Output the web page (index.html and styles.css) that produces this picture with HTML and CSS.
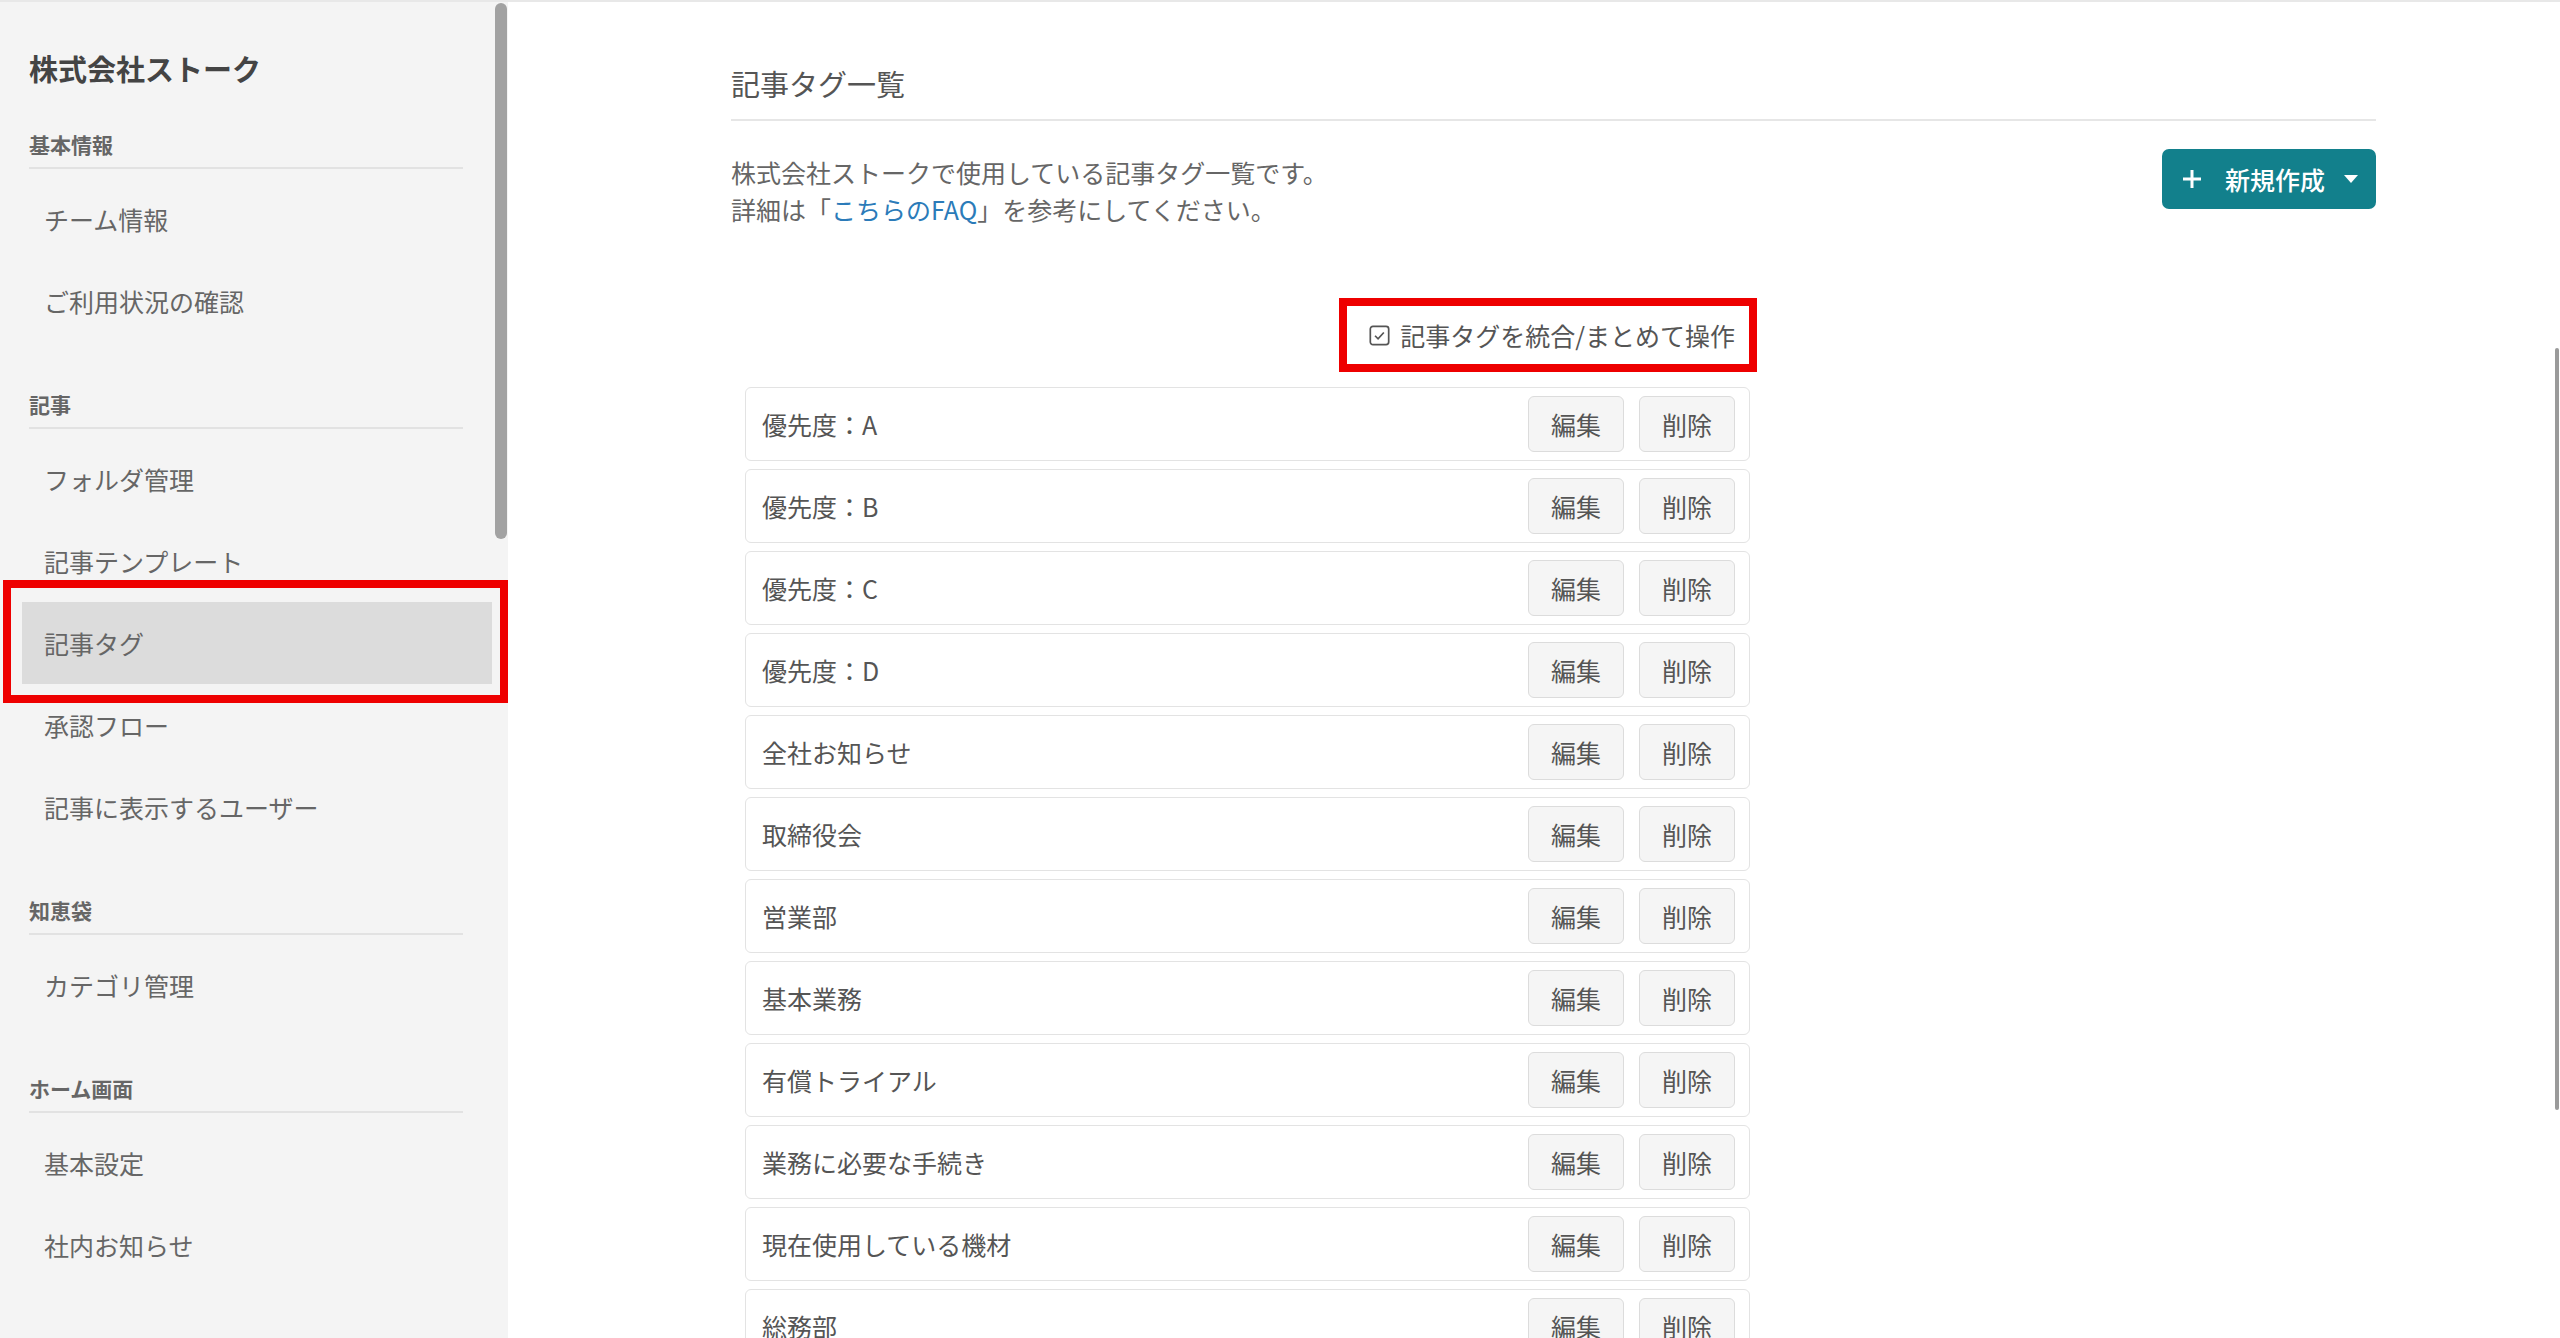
FILE: index.html
```html
<!DOCTYPE html>
<html lang="ja">
  <head>
    <meta charset="UTF-8" />
    <meta name="viewport" content="width=device-width, initial-scale=1.0" />
    <title>記事タグ一覧</title>
    <link rel="stylesheet" href="styles.css">
  </head>
  <body>
    <div class="layout">
      <aside class="sidebar">
        <div class="sidebar-thumb"></div>
        <h1 class="team-name">株式会社ストーク</h1>

        <section class="nav-group">
          <h3 class="nav-heading">基本情報</h3>
          <ul class="nav-list">
            <li><a href="#">チーム情報</a></li>
            <li><a href="#">ご利用状況の確認</a></li>
          </ul>
        </section>

        <section class="nav-group">
          <h3 class="nav-heading">記事</h3>
          <ul class="nav-list">
            <li><a href="#">フォルダ管理</a></li>
            <li><a href="#">記事テンプレート</a></li>
            <li><a href="#" class="active marked">記事タグ</a></li>
            <li><a href="#">承認フロー</a></li>
            <li><a href="#">記事に表示するユーザー</a></li>
          </ul>
        </section>

        <section class="nav-group">
          <h3 class="nav-heading">知恵袋</h3>
          <ul class="nav-list">
            <li><a href="#">カテゴリ管理</a></li>
          </ul>
        </section>

        <section class="nav-group">
          <h3 class="nav-heading">ホーム画面</h3>
          <ul class="nav-list">
            <li><a href="#">基本設定</a></li>
            <li><a href="#">社内お知らせ</a></li>
          </ul>
        </section>

        <section class="nav-group">
          <h3 class="nav-heading">検索</h3>
        </section>
      </aside>

      <main class="content">
        <div class="page-thumb"></div>
        <h2 class="page-title">記事タグ一覧</h2>

        <div class="intro">
          <p class="intro-text">
            株式会社ストークで使用している記事タグ一覧です。<br>
            詳細は「<a href="#">こちらのFAQ</a>」を参考にしてください。
          </p>
          <button class="new-button" type="button">
            <svg class="plus-icon" viewBox="0 0 20 20"><path d="M10 1v18M1 10h18" /></svg>
            <span>新規作成</span>
            <svg class="caret-icon" viewBox="0 0 14 8"><path d="M0 0h14L7 8z" /></svg>
          </button>
        </div>

        <div class="tag-area">
          <div class="merge-bar">
            <a href="#" class="merge-link marked">
              <svg viewBox="0 0 16 16"><rect x="1" y="1" width="14" height="14" rx="2" /><path d="M4.6 8.2l2.3 2.3 4.4-4.8" /></svg>
              記事タグを統合/まとめて操作
            </a>
          </div>

          <ul class="tag-list">
            <li class="tag-row"><span class="tag-name">優先度：A</span><div class="tag-actions"><button>編集</button><button>削除</button></div></li>
            <li class="tag-row"><span class="tag-name">優先度：B</span><div class="tag-actions"><button>編集</button><button>削除</button></div></li>
            <li class="tag-row"><span class="tag-name">優先度：C</span><div class="tag-actions"><button>編集</button><button>削除</button></div></li>
            <li class="tag-row"><span class="tag-name">優先度：D</span><div class="tag-actions"><button>編集</button><button>削除</button></div></li>
            <li class="tag-row"><span class="tag-name">全社お知らせ</span><div class="tag-actions"><button>編集</button><button>削除</button></div></li>
            <li class="tag-row"><span class="tag-name">取締役会</span><div class="tag-actions"><button>編集</button><button>削除</button></div></li>
            <li class="tag-row"><span class="tag-name">営業部</span><div class="tag-actions"><button>編集</button><button>削除</button></div></li>
            <li class="tag-row"><span class="tag-name">基本業務</span><div class="tag-actions"><button>編集</button><button>削除</button></div></li>
            <li class="tag-row"><span class="tag-name">有償トライアル</span><div class="tag-actions"><button>編集</button><button>削除</button></div></li>
            <li class="tag-row"><span class="tag-name">業務に必要な手続き</span><div class="tag-actions"><button>編集</button><button>削除</button></div></li>
            <li class="tag-row"><span class="tag-name">現在使用している機材</span><div class="tag-actions"><button>編集</button><button>削除</button></div></li>
            <li class="tag-row"><span class="tag-name">総務部</span><div class="tag-actions"><button>編集</button><button>削除</button></div></li>
          </ul>
        </div>
      </main>
    </div>
  </body>
</html>
```

FILE: styles.css
```css
* {
  margin: 0;
  padding: 0;
  box-sizing: border-box;
}

html,
body {
  height: 100%;
}

body {
  font-family: "Noto Sans CJK JP", "Noto Sans", sans-serif;
  color: #555555;
  background-color: #ffffff;
  border-top: 2px solid #e8e8e8;
  overflow: hidden;
}

.layout {
  display: flex;
  height: calc(100vh - 2px);
}

/* red annotation frames */
.marked {
  position: relative;
}

.marked::after {
  content: "";
  position: absolute;
  border: 8px solid #ee0000;
  pointer-events: none;
}

/* sidebar */
.sidebar {
  position: relative;
  width: 508px;
  flex-shrink: 0;
  background-color: #f4f4f4;
  padding-top: 50px;
  overflow: hidden;
}

.sidebar-thumb {
  position: absolute;
  top: 1px;
  left: 495px;
  width: 12px;
  height: 536px;
  border-radius: 6px;
  background-color: #a2a2a2;
}

.team-name {
  font-size: 29px;
  line-height: 32px;
  font-weight: 700;
  color: #444444;
  margin: 0 0 48px 29px;
}

.nav-group + .nav-group {
  margin-top: 50px;
}

.nav-heading {
  font-size: 21px;
  line-height: 24px;
  font-weight: 700;
  color: #666666;
  margin: 0 45px 0 29px;
  padding-bottom: 11px;
  border-bottom: 2px solid #e2e2e2;
}

.nav-list {
  list-style: none;
  margin: 9px 16px 0 22px;
}

.nav-list a {
  display: block;
  height: 82px;
  line-height: 82px;
  padding-left: 22px;
  font-size: 25px;
  color: #666666;
  text-decoration: none;
}

.nav-list a.active {
  background-color: #dcdcdc;
}

.nav-list a.active::after {
  top: -22px;
  left: -19px;
  right: -16px;
  bottom: -19px;
}

/* main */
.content {
  position: relative;
  flex-grow: 1;
  padding: 62px 184px 0 223px;
  overflow: hidden;
}

.page-thumb {
  position: absolute;
  top: 346px;
  right: 1px;
  width: 4px;
  height: 762px;
  border-radius: 2px;
  background-color: #9a9a9a;
}

.page-title {
  font-size: 29px;
  line-height: 38px;
  font-weight: 400;
  color: #555555;
  padding-bottom: 17px;
  border-bottom: 2px solid #e6e6e6;
}

.intro {
  display: flex;
  justify-content: space-between;
  align-items: flex-start;
  margin-top: 28px;
}

.intro-text {
  font-size: 25px;
  line-height: 37px;
  color: #666666;
  padding-top: 5px;
}

.intro-text a {
  color: #2b7bb9;
  text-decoration: none;
}

.new-button {
  display: flex;
  align-items: center;
  height: 60px;
  padding: 0 18px 0 20px;
  border: none;
  border-radius: 7px;
  background-color: #12808c;
  color: #ffffff;
  font-family: inherit;
  font-size: 25px;
  font-weight: 500;
  cursor: pointer;
}

.plus-icon {
  width: 20px;
  height: 20px;
  margin-right: 23px;
  stroke: #ffffff;
  stroke-width: 3;
  fill: none;
}

.caret-icon {
  width: 14px;
  height: 8px;
  margin-left: 19px;
  fill: #ffffff;
}

.tag-area {
  width: 1005px;
  margin-left: 14px;
}

.merge-bar {
  display: flex;
  justify-content: flex-end;
  margin-top: 78px;
  padding-right: 1px;
}

.merge-link {
  display: flex;
  align-items: center;
  height: 58px;
  padding: 0 14px 0 22px;
  font-size: 25px;
  color: #555555;
  text-decoration: none;
}

.merge-link svg {
  width: 21px;
  height: 21px;
  margin-right: 10px;
  fill: none;
  stroke: #555555;
  stroke-width: 1.3;
}

.merge-link::after {
  top: -8px;
  left: -8px;
  right: -8px;
  bottom: -8px;
}

.tag-list {
  list-style: none;
  margin-top: 23px;
}

.tag-row {
  display: flex;
  align-items: center;
  height: 74px;
  margin-bottom: 8px;
  padding: 0 14px 0 16px;
  border: 1px solid #e3e3e3;
  border-radius: 6px;
  background-color: #ffffff;
}

.tag-name {
  flex-grow: 1;
  font-size: 25px;
  color: #555555;
}

.tag-actions {
  display: flex;
  gap: 15px;
}

.tag-actions button {
  width: 96px;
  height: 56px;
  border: 1px solid #dcdcdc;
  border-radius: 6px;
  background-color: #f5f5f5;
  font-family: inherit;
  font-size: 25px;
  color: #555555;
  cursor: pointer;
}
```
